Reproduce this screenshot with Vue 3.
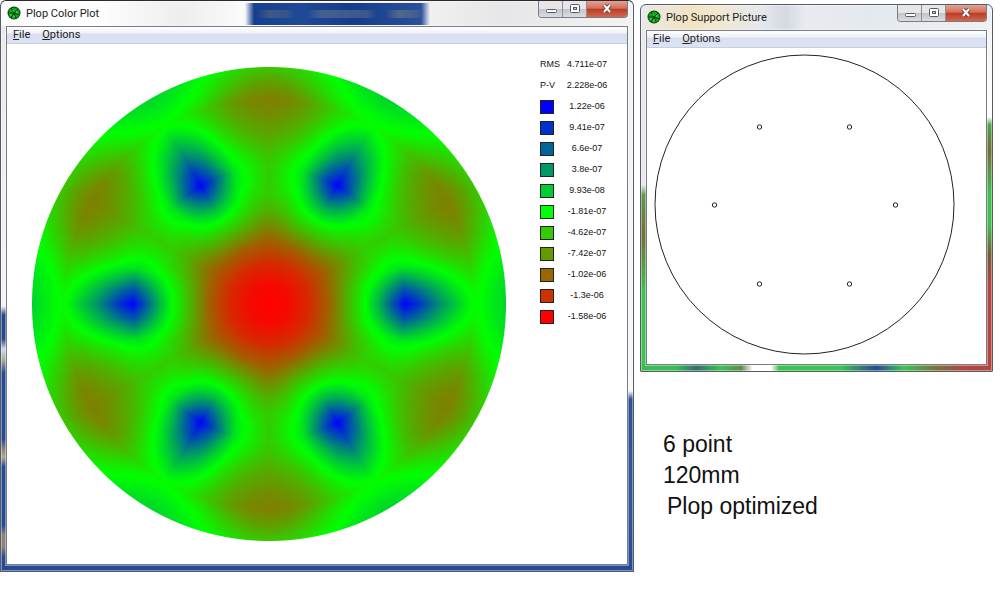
<script setup>
import { onMounted, ref } from 'vue'

const plot = ref(null)
const size = 474

const stats = [
  { label: 'RMS', value: '4.711e-07' },
  { label: 'P-V', value: '2.228e-06' },
]
const levels = [
  '1.22e-06', '9.41e-07', '6.6e-07', '3.8e-07', '9.93e-08', '-1.81e-07',
  '-4.62e-07', '-7.42e-07', '-1.02e-06', '-1.3e-06', '-1.58e-06',
]
const supports = [[112, 79], [202, 79], [67, 157], [248, 157], [112, 236], [202, 236]]

// Surface error (0 = lowest, 1 = highest) sampled on rings; one row for each
// 5 degrees away from the nearest support, mirrored round the disc.
const rings = [0, 20, 40, 60, 80, 95, 110, 123, 136, 150, 170, 190, 205, 220, 238]
const field = [
  [0, 0.02, 0.08, 0.19, 0.36, 0.49, 0.65, 0.83, 1, 0.9, 0.73, 0.59, 0.49, 0.53, 0.59],
  [0, 0.02, 0.08, 0.19, 0.36, 0.48, 0.62, 0.76, 0.87, 0.79, 0.65, 0.53, 0.47, 0.52, 0.57],
  [0, 0.02, 0.08, 0.19, 0.35, 0.46, 0.56, 0.65, 0.72, 0.64, 0.54, 0.46, 0.42, 0.49, 0.54],
  [0, 0.02, 0.08, 0.19, 0.33, 0.43, 0.5, 0.54, 0.56, 0.52, 0.45, 0.38, 0.36, 0.43, 0.5],
  [0, 0.02, 0.08, 0.18, 0.31, 0.39, 0.45, 0.49, 0.49, 0.46, 0.38, 0.32, 0.3, 0.37, 0.45],
  [0, 0.02, 0.08, 0.18, 0.29, 0.37, 0.42, 0.44, 0.44, 0.41, 0.34, 0.29, 0.26, 0.32, 0.41],
  [0, 0.02, 0.08, 0.17, 0.28, 0.35, 0.4, 0.4, 0.4, 0.38, 0.32, 0.27, 0.25, 0.3, 0.39],
]

function ramp(t) {
  return t < 0.5
    ? [255 * (1 - 2 * t), 510 * t, 0]
    : [0, 510 * (1 - t), 255 * (2 * t - 1)]
}
function swatch(i) {
  return `rgb(${ramp(1 - i / 10).map(Math.round).join(',')})`
}
function sample(r, degrees) {
  const wrapped = ((degrees % 60) + 60) % 60
  const a = Math.min(wrapped, 60 - wrapped) / 5
  const i = Math.min(Math.floor(a), 5)
  let k = 0
  while (k < rings.length - 2 && rings[k + 1] < r) k++
  const u = (r - rings[k]) / (rings[k + 1] - rings[k])
  const v = a - i
  const inner = field[i][k] * (1 - v) + field[i + 1][k] * v
  const outer = field[i][k + 1] * (1 - v) + field[i + 1][k + 1] * v
  return inner * (1 - u) + outer * u
}

onMounted(() => {
  const ctx = plot.value.getContext('2d')
  const image = ctx.createImageData(size, size)
  const c = size / 2
  for (let y = 0; y < size; y++) {
    for (let x = 0; x < size; x++) {
      const dx = x + 0.5 - c
      const dy = y + 0.5 - c
      const r = Math.hypot(dx, dy)
      const cover = Math.max(0, Math.min(1, c - r + 0.5))
      if (!cover) continue
      const rgb = ramp(sample(r, (Math.atan2(dy, dx) * 180) / Math.PI))
      image.data.set([...rgb, cover * 255], (y * size + x) * 4)
    }
  }
  ctx.putImageData(image, 0, 0)
})
</script>

<template>
  <main class="desktop">
    <section class="window color-window">
      <header class="titlebar">
        <svg class="app-icon" viewBox="0 0 14 14" aria-hidden="true">
          <circle cx="7" cy="7" r="6.5" fill="#073d0b" />
          <circle cx="7" cy="7" r="5.6" fill="#12a41c" />
          <path d="M7 7 4 2M7 7l4-4M7 7 1 7M7 7l5 2M7 7l-3 5M7 7l2 5" stroke="#054409" />
          <path d="M5 4h2v2zM9 5l2 1-2 1zM3 8l2 1-2 1zM7 9l1 2-2 1z" fill="#43e64b" />
        </svg>
        <h1>Plop Color Plot</h1>
        <div class="controls">
          <button type="button" aria-label="Minimize"><svg viewBox="0 0 12 12"><rect x="1.5" y="6.5" width="10" height="3" rx="1" fill="#fff" stroke="#555b66" /></svg></button>
          <button type="button" aria-label="Maximize"><svg viewBox="0 0 12 12"><rect x="1.5" y="1.5" width="9" height="8" rx="1" fill="#fff" stroke="#555b66" /><rect x="4.5" y="4.5" width="3" height="2" fill="#ccd" stroke="#555b66" /></svg></button>
          <button type="button" class="close" aria-label="Close"><svg viewBox="0 0 12 12"><path d="M3 2l6 7M9 2l-6 7" stroke="#6b4040" stroke-width="4" /><path d="M3 2l6 7M9 2l-6 7" stroke="#fff" stroke-width="2" /></svg></button>
        </div>
      </header>
      <div class="client">
        <nav class="menu">
          <button type="button"><u>F</u>ile</button>
          <button type="button"><u>O</u>ptions</button>
        </nav>
        <div class="color-view">
          <canvas ref="plot" class="plot" :width="size" :height="size" role="img" aria-label="Surface error"></canvas>
          <table class="legend">
            <tbody>
              <tr v-for="s in stats" :key="s.label">
                <th scope="row">{{ s.label }}</th>
                <td>{{ s.value }}</td>
              </tr>
              <tr v-for="(level, i) in levels" :key="level">
                <th scope="row"><span class="swatch" :style="{ background: swatch(i) }"></span></th>
                <td>{{ level }}</td>
              </tr>
            </tbody>
          </table>
        </div>
      </div>
    </section>

    <div class="side">
      <section class="window support-window">
        <header class="titlebar">
          <svg class="app-icon" viewBox="0 0 14 14" aria-hidden="true">
            <circle cx="7" cy="7" r="6.5" fill="#073d0b" />
            <circle cx="7" cy="7" r="5.6" fill="#12a41c" />
            <path d="M7 7 4 2M7 7l4-4M7 7 1 7M7 7l5 2M7 7l-3 5M7 7l2 5" stroke="#054409" />
            <path d="M5 4h2v2zM9 5l2 1-2 1zM3 8l2 1-2 1zM7 9l1 2-2 1z" fill="#43e64b" />
          </svg>
          <h2>Plop Support Picture</h2>
          <div class="controls">
            <button type="button" aria-label="Minimize"><svg viewBox="0 0 12 12"><rect x="1.5" y="6.5" width="10" height="3" rx="1" fill="#fff" stroke="#555b66" /></svg></button>
            <button type="button" aria-label="Maximize"><svg viewBox="0 0 12 12"><rect x="1.5" y="1.5" width="9" height="8" rx="1" fill="#fff" stroke="#555b66" /><rect x="4.5" y="4.5" width="3" height="2" fill="#ccd" stroke="#555b66" /></svg></button>
            <button type="button" class="close" aria-label="Close"><svg viewBox="0 0 12 12"><path d="M3 2l6 7M9 2l-6 7" stroke="#6b4040" stroke-width="4" /><path d="M3 2l6 7M9 2l-6 7" stroke="#fff" stroke-width="2" /></svg></button>
          </div>
        </header>
        <div class="client">
          <nav class="menu">
            <button type="button"><u>F</u>ile</button>
            <button type="button"><u>O</u>ptions</button>
          </nav>
          <svg class="support-view" viewBox="0 0 339 316" role="img" aria-label="Support points">
            <g fill="none" stroke="#222">
              <circle cx="157.5" cy="156.5" r="149.5" />
              <circle v-for="p in supports" :key="p.join()" :cx="p[0] + 0.5" :cy="p[1]" r="2.2" />
            </g>
          </svg>
        </div>
      </section>
      <div class="notes">
        <p>6 point</p>
        <p>120mm</p>
        <p class="indent">Plop optimized</p>
      </div>
    </div>
  </main>
</template>

<style>
body {
  margin: 0;
  background: #fff;
}
</style>

<style scoped>
.desktop {
  display: grid;
  grid-template-columns: minmax(0, 634fr) minmax(0, 353fr);
  align-items: start;
  gap: 6px;
  padding-right: 7px;
  color: #111;
}
.window {
  box-sizing: border-box;
  padding: 0 5px 6px;
  border: 1px solid #555c68;
  border-radius: 6px 6px 1px 1px;
  box-shadow: inset 0 0 0 1px rgba(255, 255, 255, 0.4);
}
.color-window {
  border-top-color: #33272b;
  background:
    linear-gradient(90deg, transparent 256px, #3e5684 268px, #37568d 285px, transparent 294px, transparent 306px, #45608c 320px, #3c588c 366px, transparent 376px, transparent 384px, #536688 398px, #456090 414px, transparent 424px) 0 9px / 100% 8px no-repeat,
    linear-gradient(90deg, transparent 244px, #173f8e 253px, #1f4a97 300px, #153c8c 350px, #28509b 420px, transparent 429px) 0 2px / 100% 22px no-repeat,
    linear-gradient(35deg, transparent 128px, #dedede 133px, #e8e8e8 138px, transparent 146px) 0 0 / 180px 25px no-repeat,
    linear-gradient(90deg, #fbfbfb 0, #fff 90px, #eee 180px, #fafafa 240px, #f0f0f0 430px, #e6e6e8 500px, #f3f3f3 100%) 0 0 / 100% 25px no-repeat,
    linear-gradient(#f1f1f1 0, #f7f7f7 390px, #2c5294 398px, #31569a 500px, #274a94 100%) 100% 0 / 8px 100% no-repeat,
    linear-gradient(#e9e9e9 0, #f4f4f4 305px, #25478f 314px, #25478f 338px, #d5d9e2 348px, #a6a394 360px, #274a94 372px, #274a94 438px, #8c8378 448px, #b0a896 456px, #274a94 466px, #274a94 524px, #8c8378 534px, #8c8378 546px, #274a94 556px);
}
.side {
  padding-top: 4px;
}
.support-window {
  background:
    linear-gradient(90deg, #e9e9e9 0, #f2e3c1 50px, #f2e8d0 75px, #e5e8ec 120px, #d5d9e1 145px, #e8ebef 165px, #e4e9ed 230px, #eef1f4 100%) 0 0 / 100% 25px no-repeat,
    linear-gradient(90deg, #39bd50 0, #39bd50 35px, #356f70 55px, #3bc450 80px, #5d8c48 100px, #fff 112px, #fff 130px, #3bc450 138px, #3bc450 200px, #274a94 235px, #3bc450 262px, #7e713e 295px, #b5453f 325px, #b5453f 100%) 0 100% / 100% 7px no-repeat,
    linear-gradient(#f1f1f1 0, #fff 112px, #4da645 120px, #756d36 145px, #3fc14d 190px, #3fc14d 220px, #765b38 250px, #b5453f 280px) 100% 0 / 8px 100% no-repeat,
    linear-gradient(#e9e9e9 0, #e9e9e9 180px, #5d9b49 190px, #756d36 230px, #3fc14d 285px, #3fc14d 100%);
}
.titlebar {
  display: flex;
  align-items: flex-start;
  height: 25px;
}
.app-icon {
  width: 14px;
  height: 14px;
  margin: 5px 0 0 1px;
}
h1,
h2 {
  flex: 1;
  margin: 0 0 0 5px;
  font: 11px/25px Roboto, sans-serif;
  white-space: nowrap;
  color: #222;
}
.controls {
  display: flex;
  border: 1px solid #777c86;
  border-top: 0;
  border-radius: 0 0 4px 4px;
  overflow: hidden;
}
.controls button {
  display: grid;
  place-items: center;
  width: 24px;
  height: 16px;
  padding: 0;
  border: 0;
  border-right: 1px solid #8b8f98;
  background: linear-gradient(#e6e6e8 0 48%, #c3c5ca 52%, #dadce0);
}
.controls svg {
  width: 12px;
  height: 12px;
}
.controls .close {
  width: 40px;
  border-right: 0;
  background: linear-gradient(#e2a393 0, #d2705a 45%, #bd3c24 52%, #d2684c);
}
.client {
  border: 1px solid #757c86;
  background: #fff;
  box-shadow: 0 0 0 1px rgba(255, 255, 255, 0.4);
}
.menu {
  display: flex;
  gap: 12px;
  height: 16px;
  padding-left: 6px;
  border-bottom: 1px solid #c9cddd;
  background: linear-gradient(#fff 0, #eef1f8 38%, #d8def0 45%, #dde3f3);
}
.menu button {
  padding: 0;
  border: 0;
  background: none;
  color: #222;
  font: 11px/16px Roboto, sans-serif;
}
.color-view {
  display: grid;
  grid-template-columns: minmax(0, 1fr) 87px;
  gap: 34px;
  align-items: start;
  padding: 10px 0 23px 25px;
}
.plot {
  display: block;
  width: 100%;
  margin-top: 13px;
}
.legend {
  width: 68px;
  border-collapse: collapse;
  table-layout: fixed;
  font: 9px/21px "Liberation Sans", sans-serif;
}
.legend tr {
  height: 21px;
}
.legend th {
  width: 26px;
  padding: 0;
  font-weight: 400;
  text-align: left;
}
.legend td {
  width: 42px;
  padding: 0;
  text-align: center;
  white-space: nowrap;
}
.swatch {
  display: block;
  box-sizing: border-box;
  width: 14px;
  height: 14px;
  border: 1px solid #222;
}
.support-view {
  display: block;
  width: 100%;
}
.notes {
  padding: 57px 0 0 23px;
  font: 23px/31px "Liberation Sans", sans-serif;
}
.notes p {
  margin: 0;
}
.notes .indent {
  padding-left: 4px;
}
</style>
